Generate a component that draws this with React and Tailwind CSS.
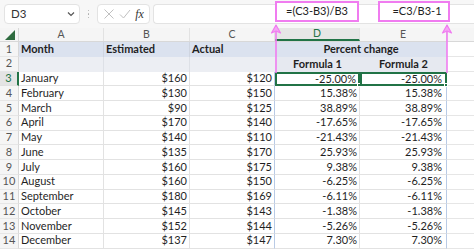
import React from "react";

const data = [
  ["January", "$160", "$120", "-25.00%"],
  ["February", "$130", "$150", "15.38%"],
  ["March", "$90", "$125", "38.89%"],
  ["April", "$170", "$140", "-17.65%"],
  ["May", "$140", "$110", "-21.43%"],
  ["June", "$135", "$170", "25.93%"],
  ["July", "$160", "$175", "9.38%"],
  ["August", "$160", "$150", "-6.25%"],
  ["September", "$180", "$169", "-6.11%"],
  ["October", "$145", "$143", "-1.38%"],
  ["November", "$152", "$144", "-5.26%"],
  ["December", "$137", "$147", "7.30%"],
];

function Arrow({ x }) {
  return (
    <svg className="absolute top-[23px]" style={{ left: x - 6 }} width="12" height="50" viewBox="0 0 12 50">
      <line x1="6" y1="2" x2="6" y2="50" stroke="#f07cf0" strokeWidth="1.6" />
      <path d="M6 2 L1.5 10 L6 8 L10.5 10 Z" fill="#f4a6f4" stroke="#f07cf0" strokeWidth="1.2" strokeLinejoin="round" />
    </svg>
  );
}

export default function App() {
  return (
    <div className="relative w-[474px] h-[249px] overflow-hidden bg-white text-[11px] text-[#1f1f1f] font-['Lato','Liberation_Sans',sans-serif]">
      {/* formula bar */}
      <div className="h-[28px] flex items-center bg-[#f7f7f7] pl-[4px]">
        <div className="w-[76px] h-[20px] bg-white border border-[#e3e3e3] rounded-[4px] flex items-center justify-between pl-[6px] pr-[3px] text-[11.5px] text-[#333]">
          <span>D3</span>
          <svg width="10" height="10" viewBox="0 0 10 10"><path d="M2 3.5 L5 6.5 L8 3.5" fill="none" stroke="#555" strokeWidth="1.2" /></svg>
        </div>
        <div className="w-[17px] flex flex-col items-center gap-[2px]">
          <span className="w-[1.5px] h-[1.5px] bg-[#aaa] rounded-full" />
          <span className="w-[1.5px] h-[1.5px] bg-[#aaa] rounded-full" />
          <span className="w-[1.5px] h-[1.5px] bg-[#aaa] rounded-full" />
        </div>
        <div className="w-[53px] h-[20px] bg-white border border-[#e3e3e3] rounded-[4px] flex items-center justify-around px-[3px]">
          <svg width="12" height="12" viewBox="0 0 12 12"><path d="M1.5 1.5 L10.5 10.5 M10.5 1.5 L1.5 10.5" stroke="#c0c0c0" strokeWidth="1" /></svg>
          <svg width="12" height="12" viewBox="0 0 12 12"><path d="M1 6.5 L4.5 10 L11 2" fill="none" stroke="#c0c0c0" strokeWidth="1" /></svg>
          <span className="font-['Liberation_Serif',serif] italic text-[12px] text-[#333]">fx</span>
        </div>
        <div className="ml-[3px] flex-1 h-[20px] bg-white border border-[#e3e3e3] rounded-l-[4px] border-r-0" />
      </div>

      {/* column headers */}
      <div className="h-[14px] flex bg-[#f5f5f5] text-[#555] text-[10.5px] border-b border-[#d8d8d8]">
        <div className="w-[19px] relative border-r border-[#d8d8d8]">
          <svg className="absolute left-[5px] top-[2px]" width="10" height="10" viewBox="0 0 10 10"><path d="M10 0 L10 10 L0 10 Z" fill="#2e6b3f" /></svg>
        </div>
        <div className="w-[85px] flex items-center justify-center border-r border-[#e2e2e2]">A</div>
        <div className="w-[86px] flex items-center justify-center border-r border-[#e2e2e2]">B</div>
        <div className="w-[85px] flex items-center justify-center border-r border-[#e2e2e2]">C</div>
        <div className="w-[85px] flex items-center justify-center bg-[#e6e6e6] text-[#217346] border-b-2 border-[#217346] border-r border-r-[#e2e2e2]">D</div>
        <div className="w-[87px] flex items-center justify-center border-r border-[#e2e2e2]">E</div>
        <div className="flex-1" />
      </div>

      {/* row 1 */}
      <div className="h-[14.75px] flex font-bold">
        <div className="w-[19px] bg-[#f5f5f5] text-[#555] font-normal flex items-center justify-center border-r border-[#d8d8d8] border-b border-b-[#e6e6e6]">1</div>
        <div className="w-[85px] bg-[#dbe2ef] flex items-center pl-[2px] border-r border-[#cfd5e0]">Month</div>
        <div className="w-[86px] bg-[#dbe2ef] flex items-center pl-[2px] border-r border-[#cfd5e0]">Estimated</div>
        <div className="w-[85px] bg-[#dbe2ef] flex items-center pl-[2px]">Actual</div>
        <div className="w-[172px] bg-[#dbe2ef] flex items-center justify-center">Percent change</div>
        <div className="flex-1 border-b border-[#e6e6e6]" />
      </div>
      {/* row 2 */}
      <div className="h-[14.75px] flex font-bold">
        <div className="w-[19px] bg-[#f5f5f5] text-[#555] font-normal flex items-center justify-center border-r border-[#d8d8d8] border-b border-b-[#e6e6e6]">2</div>
        <div className="w-[85px] bg-[#eceef3] border-r border-[#dde0e6]" />
        <div className="w-[86px] bg-[#eceef3] border-r border-[#dde0e6]" />
        <div className="w-[85px] bg-[#eceef3]" />
        <div className="w-[85px] bg-[#e6e9f0] flex items-center justify-center">Formula 1</div>
        <div className="w-[87px] bg-[#e6e9f0] flex items-center justify-center">Formula 2</div>
        <div className="flex-1 border-b border-[#e6e6e6]" />
      </div>

      {data.map((r, i) => {
        const sel = i === 0;
        return (
          <div key={i} className="h-[14.75px] flex">
            <div className={sel
              ? "w-[19px] bg-[#e4e4e4] text-[#217346] flex items-center justify-center border-r-2 border-[#217346] border-b border-b-[#e0e0e0]"
              : "w-[19px] bg-[#f5f5f5] text-[#555] flex items-center justify-center border-r border-[#d8d8d8] border-b border-b-[#e6e6e6]"}>{i + 3}</div>
            <div className="w-[85px] flex items-center pl-[2px] border-r border-b border-[#e2e2e2]">{r[0]}</div>
            <div className="w-[86px] flex items-center justify-end pr-[2px] border-r border-b border-[#e2e2e2]">{r[1]}</div>
            <div className="w-[85px] flex items-center justify-end pr-[2px] border-r border-b border-[#e2e2e2] border-r-[#b9cbe6]">{r[2]}</div>
            <div className={sel
              ? "relative w-[85px] flex items-center justify-end pr-[2px] border-2 border-[#217346]"
              : "w-[85px] flex items-center justify-end pr-[2px] border-r border-b border-[#e2e2e2]"}>
              {r[3]}
              {sel && <span className="absolute right-[-3px] bottom-[-3px] w-[4px] h-[4px] bg-[#217346] border border-white" />}
            </div>
            <div className={sel
              ? "relative w-[87px] flex items-center justify-end pr-[3px] border-2 border-[#217346]"
              : "w-[87px] flex items-center justify-end pr-[4px] border-r border-b border-[#e2e2e2] border-r-[#b9cbe6]"}>
              {r[3]}
              {sel && <span className="absolute right-[-3px] bottom-[-3px] w-[4px] h-[4px] bg-[#217346] border border-white" />}
            </div>
            <div className="flex-1 border-b border-[#e6e6e6]" />
          </div>
        );
      })}

      {/* callouts */}
      <div className="absolute left-[275px] top-[1px] w-[84px] h-[21px] bg-white border-2 border-[#f07cf0] flex items-center justify-center text-[11px] text-[#222]">=(C3-B3)/B3</div>
      <div className="absolute left-[378px] top-[1px] w-[72px] h-[21px] bg-white border-2 border-[#f07cf0] flex items-center justify-center pl-[6px] text-[11px] text-[#222]">=C3/B3-1</div>
      <Arrow x={275.5} />
      <Arrow x={447} />
    </div>
  );
}
